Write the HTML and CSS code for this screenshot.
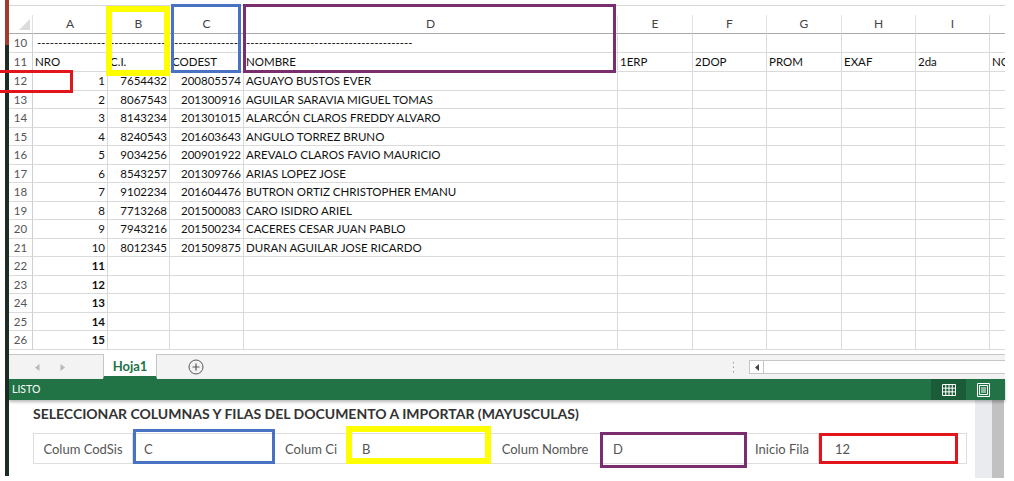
FILE: index.html
```html
<!DOCTYPE html>
<html lang="es">
<head>
<meta charset="utf-8">
<title>Importar</title>
<link rel="stylesheet" href="styles.css">
</head>
<body>
<div class="app">
  <div class="edge"><div class="edge-bar"></div></div>
  <div class="main">
    <div class="topline"></div>
    <div class="sheet">
      <div class="row tall hdr">
        <div class="c corner"><span class="tri"></span></div>
        <div class="c">A</div><div class="c">B</div><div class="c">C</div><div class="c">D</div><div class="c">E</div><div class="c">F</div><div class="c">G</div><div class="c">H</div><div class="c">I</div><div class="c"></div>
      </div>
      <div class="row tall">
        <div class="c rh">10</div>
        <div class="c dl">----------------</div>
        <div class="c">-------------</div>
        <div class="c dl">---------------</div>
        <div class="c">---------------------------------------</div>
        <div class="c"></div><div class="c"></div><div class="c"></div><div class="c"></div><div class="c"></div><div class="c"></div>
      </div>
      <div class="row tall">
        <div class="c rh">11</div>
        <div class="c">NRO</div><div class="c">C.I.</div><div class="c">CODEST</div><div class="c">NOMBRE</div><div class="c">1ERP</div><div class="c">2DOP</div><div class="c">PROM</div><div class="c">EXAF</div><div class="c">2da</div><div class="c">NOTA</div>
      </div>
      <div class="row"><div class="c rh">12</div><div class="c num">1</div><div class="c num">7654432</div><div class="c num">200805574</div><div class="c">AGUAYO BUSTOS EVER</div><div class="c"></div><div class="c"></div><div class="c"></div><div class="c"></div><div class="c"></div><div class="c"></div></div>
      <div class="row"><div class="c rh">13</div><div class="c num">2</div><div class="c num">8067543</div><div class="c num">201300916</div><div class="c">AGUILAR SARAVIA MIGUEL TOMAS</div><div class="c"></div><div class="c"></div><div class="c"></div><div class="c"></div><div class="c"></div><div class="c"></div></div>
      <div class="row"><div class="c rh">14</div><div class="c num">3</div><div class="c num">8143234</div><div class="c num">201301015</div><div class="c">ALARCÓN CLAROS FREDDY ALVARO</div><div class="c"></div><div class="c"></div><div class="c"></div><div class="c"></div><div class="c"></div><div class="c"></div></div>
      <div class="row"><div class="c rh">15</div><div class="c num">4</div><div class="c num">8240543</div><div class="c num">201603643</div><div class="c">ANGULO TORREZ BRUNO</div><div class="c"></div><div class="c"></div><div class="c"></div><div class="c"></div><div class="c"></div><div class="c"></div></div>
      <div class="row"><div class="c rh">16</div><div class="c num">5</div><div class="c num">9034256</div><div class="c num">200901922</div><div class="c">AREVALO CLAROS FAVIO MAURICIO</div><div class="c"></div><div class="c"></div><div class="c"></div><div class="c"></div><div class="c"></div><div class="c"></div></div>
      <div class="row"><div class="c rh">17</div><div class="c num">6</div><div class="c num">8543257</div><div class="c num">201309766</div><div class="c">ARIAS LOPEZ JOSE</div><div class="c"></div><div class="c"></div><div class="c"></div><div class="c"></div><div class="c"></div><div class="c"></div></div>
      <div class="row"><div class="c rh">18</div><div class="c num">7</div><div class="c num">9102234</div><div class="c num">201604476</div><div class="c">BUTRON ORTIZ CHRISTOPHER EMANU</div><div class="c"></div><div class="c"></div><div class="c"></div><div class="c"></div><div class="c"></div><div class="c"></div></div>
      <div class="row"><div class="c rh">19</div><div class="c num">8</div><div class="c num">7713268</div><div class="c num">201500083</div><div class="c">CARO ISIDRO ARIEL</div><div class="c"></div><div class="c"></div><div class="c"></div><div class="c"></div><div class="c"></div><div class="c"></div></div>
      <div class="row"><div class="c rh">20</div><div class="c num">9</div><div class="c num">7943216</div><div class="c num">201500234</div><div class="c">CACERES CESAR JUAN PABLO</div><div class="c"></div><div class="c"></div><div class="c"></div><div class="c"></div><div class="c"></div><div class="c"></div></div>
      <div class="row"><div class="c rh">21</div><div class="c num">10</div><div class="c num">8012345</div><div class="c num">201509875</div><div class="c">DURAN AGUILAR JOSE RICARDO</div><div class="c"></div><div class="c"></div><div class="c"></div><div class="c"></div><div class="c"></div><div class="c"></div></div>
      <div class="row"><div class="c rh">22</div><div class="c num b">11</div><div class="c"></div><div class="c"></div><div class="c"></div><div class="c"></div><div class="c"></div><div class="c"></div><div class="c"></div><div class="c"></div><div class="c"></div></div>
      <div class="row"><div class="c rh">23</div><div class="c num b">12</div><div class="c"></div><div class="c"></div><div class="c"></div><div class="c"></div><div class="c"></div><div class="c"></div><div class="c"></div><div class="c"></div><div class="c"></div></div>
      <div class="row"><div class="c rh">24</div><div class="c num b">13</div><div class="c"></div><div class="c"></div><div class="c"></div><div class="c"></div><div class="c"></div><div class="c"></div><div class="c"></div><div class="c"></div><div class="c"></div></div>
      <div class="row"><div class="c rh">25</div><div class="c num b">14</div><div class="c"></div><div class="c"></div><div class="c"></div><div class="c"></div><div class="c"></div><div class="c"></div><div class="c"></div><div class="c"></div><div class="c"></div></div>
      <div class="row"><div class="c rh">26</div><div class="c num b">15</div><div class="c"></div><div class="c"></div><div class="c"></div><div class="c"></div><div class="c"></div><div class="c"></div><div class="c"></div><div class="c"></div><div class="c"></div></div>
    </div>

    <div class="tabbar">
      <div class="nav">
        <svg width="5" height="7" viewBox="0 0 5 7"><path d="M4.5 0 L0 3.5 L4.5 7Z" fill="#b9b9b9"/></svg>
        <svg width="5" height="7" viewBox="0 0 5 7"><path d="M0.5 0 L5 3.5 L0.5 7Z" fill="#b9b9b9"/></svg>
      </div>
      <div class="tab">Hoja1</div>
      <svg class="addsheet" width="16" height="16" viewBox="0 0 16 16"><circle cx="8" cy="8" r="7" fill="none" stroke="#5a5a5a" stroke-width="1"/><path d="M8 4.5v7M4.5 8h7" stroke="#5a5a5a" stroke-width="1.2"/></svg>
      <div class="spacer"></div>
      <svg class="dots" width="3" height="11" viewBox="0 0 3 11"><rect x="1" y="0" width="1" height="1.5" fill="#9a9a9a"/><rect x="1" y="4.5" width="1" height="1.5" fill="#9a9a9a"/><rect x="1" y="9" width="1" height="1.5" fill="#9a9a9a"/></svg>
      <div class="hscroll"><div class="hbtn"><svg width="4" height="7" viewBox="0 0 4 7"><path d="M4 0 L0 3.5 L4 7Z" fill="#444"/></svg></div></div>
    </div>

    <div class="status">
      <div class="ready">LISTO</div>
      <div class="view-grid">
        <svg width="14" height="12" viewBox="0 0 14 12"><path d="M0.5 0.5h13v11h-13z M3.75 0.5v11 M7 0.5v11 M10.25 0.5v11 M0.5 4.17h13 M0.5 7.83h13" fill="none" stroke="#fff" stroke-width="1"/></svg>
      </div>
      <div class="view-page">
        <svg width="13" height="14" viewBox="0 0 13 14"><path d="M0.5 0.5h12v13h-12z M2.5 2.5h8v9h-8z M4 5h5 M4 7h5 M4 9h5" fill="none" stroke="#fff" stroke-width="1"/></svg>
      </div>
    </div>

    <div class="panel">
      <div class="panel-body">
        <div class="ptitle">SELECCIONAR COLUMNAS Y FILAS DEL DOCUMENTO A IMPORTAR (MAYUSCULAS)</div>
        <div class="igroup">
          <div class="addon w1">Colum CodSis</div>
          <div class="field f1">C</div>
          <div class="addon w2">Colum Ci</div>
          <div class="field f2">B</div>
          <div class="addon w3">Colum Nombre</div>
          <div class="field f3">D</div>
          <div class="addon w4">Inicio Fila</div>
          <div class="field f4">12</div>
        </div>
      </div>
      <div class="pscroll"><div class="t1"></div><div class="t2"></div></div>
    </div>
  </div>
</div>

<div class="mark m-red1"></div>
<div class="mark m-yel1"></div>
<div class="mark m-blu1"></div>
<div class="mark m-pur1"></div>
<div class="mark m-blu2"></div>
<div class="mark m-yel2"></div>
<div class="mark m-pur2"></div>
<div class="mark m-red2"></div>
</body>
</html>
```
FILE: styles.css
```css
* { box-sizing: border-box; }
html, body { margin: 0; padding: 0; }
body {
  width: 1014px;
  height: 481px;
  overflow: hidden;
  background: #fff;
  font-family: Lato, "Open Sans", sans-serif;
  position: relative;
}
.app { display: flex; height: 481px; }
.edge { width: 9px; flex: none; padding-left: 5px; }
.edge-bar {
  width: 4px;
  height: 476px;
  background: linear-gradient(#a13b2c 0, #a13b2c 45px, #1e2d24 45px, #1e2d24 100%);
}
.main { width: 996px; flex: none; display: flex; flex-direction: column; }
.topline { height: 6px; border-bottom: 1px solid #d6d6d6; flex: none; }
.sheet { margin-top: 9px; flex: none; }
.row {
  display: grid;
  grid-template-columns: 24px 75px 62px 74px 374px 75px 74px 75px 74px 74px 15px;
  height: 18.5px;
}
.row.tall { height: 19px; }
.c {
  border-right: 1px solid #dadada;
  border-bottom: 1px solid #dadada;
  padding: 0 2px;
  white-space: nowrap;
  overflow: hidden;
  font-size: 11.5px;
  line-height: 18px;
  color: #111;
}
.c:last-child { border-right: none; }
.c.dl { padding-left: 4px; }
.hdr .c {
  text-align: center;
  color: #444;
  font-size: 12px;
  border-bottom-color: #ababab;
  border-right-color: #e2e2e2;
}
.hdr .corner { display: flex; justify-content: flex-end; align-items: flex-end; padding: 0 2px 3px 0; }
.tri {
  width: 0; height: 0;
  border-left: 11px solid transparent;
  border-bottom: 11px solid #dcdcdc;
}
.rh { text-align: center; color: #555; font-size: 11.5px; border-right-color: #d0d0d0; }
.num { text-align: right; }
.b { font-weight: 700; }

.tabbar {
  flex: none;
  height: 25px;
  margin-top: 4.5px;
  background: #f3f3f3;
  border-top: 1px solid #c8c8c8;
  display: flex;
  align-items: center;
}
.nav { width: 94px; display: flex; gap: 20px; padding-left: 26px; align-items: center; }
.tab {
  width: 54px;
  align-self: stretch;
  margin-top: -1px;
  background: #fff;
  border-left: 1px solid #c6c6c6;
  border-right: 1px solid #c6c6c6;
  border-bottom: 3px solid #217346;
  color: #217346;
  font-weight: 700;
  font-size: 13px;
  display: flex;
  align-items: center;
  justify-content: center;
  padding-top: 2px;
}
.addsheet { margin-left: 31px; }
.spacer { flex: 1; }
.dots { margin-right: 14px; }
.hscroll {
  width: 256px;
  height: 14px;
  background: #fff;
  border: 1px solid #c6c6c6;
  border-right: none;
  display: flex;
}
.hbtn {
  width: 14px;
  border-right: 1px solid #c6c6c6;
  display: flex;
  align-items: center;
  justify-content: center;
}

.status {
  flex: none;
  height: 21px;
  background: #217346;
  display: flex;
  align-items: stretch;
  color: #fff;
  box-shadow: 0 2px 3px rgba(0, 0, 0, 0.28);
  position: relative;
  z-index: 1;
}
.ready { padding-left: 3px; font-size: 10.5px; line-height: 21px; }
.view-grid {
  margin-left: auto;
  width: 35px;
  background: #195c37;
  display: flex;
  align-items: center;
  justify-content: center;
}
.view-page { margin-left: 11px; margin-right: 15px; display: flex; align-items: center; }

.panel { flex: 1; display: flex; }
.panel-body { flex: 1; padding: 6px 0 0 24px; }
.ptitle { font-weight: 700; font-size: 14px; line-height: 16px; color: #333; white-space: nowrap; }
.igroup {
  margin-top: 11px;
  width: 934px;
  height: 31px;
  display: flex;
  border: 1px solid #dedede;
}
.addon {
  color: #555;
  font-size: 13px;
  border-right: 1px solid #dedede;
  display: flex;
  align-items: center;
  justify-content: center;
}
.w1 { width: 99px; }
.w2 { width: 73px; }
.w3 { width: 111px; }
.w4 { width: 73px; }
.field {
  color: #555;
  font-size: 13px;
  border-right: 1px solid #dedede;
  display: flex;
  align-items: center;
  padding-left: 12px;
}
.field:last-child { border-right: none; }
.f1 { width: 142px; padding-left: 11px; }
.f2 { width: 142px; padding-left: 14px; }
.f3 { width: 145px; }
.f4 { width: 147px; padding-left: 16px; }
.pscroll { width: 30px; display: flex; height: 78px; }
.pscroll .t1 { width: 17px; background: #e9ebee; }
.pscroll .t2 { width: 12px; background: #c1c1c1; }

.mark { position: absolute; pointer-events: none; }
.m-red1 { left: -4px; top: 70px; width: 77px; height: 23px; border: 3px solid #e3151c; }
.m-yel1 { left: 106px; top: 6px; width: 64px; height: 70px; border: 6px solid #ffff00; }
.m-blu1 { left: 171px; top: 4px; width: 70px; height: 69px; border: 3px solid #4a72c2; }
.m-pur1 { left: 243px; top: 4px; width: 373px; height: 69px; border: 3px solid #7a2e6f; }
.m-blu2 { left: 133px; top: 429px; width: 142px; height: 35px; border: 3px solid #4a72c2; }
.m-yel2 { left: 346px; top: 426px; width: 145px; height: 38px; border: 6px solid #ffff00; }
.m-pur2 { left: 600px; top: 432px; width: 147px; height: 36px; border: 3px solid #7a2e6f; }
.m-red2 { left: 819px; top: 433px; width: 139px; height: 31px; border: 3px solid #e3151c; }
```
